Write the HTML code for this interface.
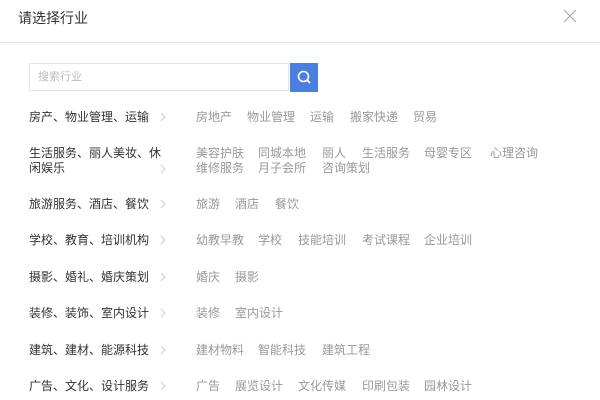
<!DOCTYPE html>
<html><head><meta charset="utf-8"><style>
body{margin:0;width:600px;height:400px;background:#fff;position:relative;overflow:hidden;font-family:"Liberation Sans","Noto Sans CJK SC",sans-serif;}
.t{position:absolute;left:18px;top:8px;font-size:14px;color:#333;line-height:20px}
.x{position:absolute;left:562px;top:8px}
.hr{position:absolute;left:0;top:42px;width:600px;height:1px;background:#e8e8e8}
.sb{position:absolute;left:29px;top:63px;width:260px;height:28px;border:1px solid #e4e4e4;box-sizing:border-box}
.sb span{position:absolute;left:8px;top:6px;font-size:11px;color:#bbb;line-height:14px}
.btn{position:absolute;left:290px;top:63px;width:28px;height:29px;background:#4a7fe0}
.c,.s{position:absolute;font-size:12px;line-height:16px;white-space:nowrap}
.c{left:29px;color:#333}
.s{color:#999}
.a{position:absolute;left:160px;width:6px;height:10px}
</style></head><body>
<div class="t">请选择行业</div>
<svg class="x" width="16" height="16" viewBox="0 0 16 16"><path d="M2 2L14 14M14 2L2 14" stroke="#aaa" stroke-width="1.2"/></svg>
<div class="hr"></div>
<div class="sb"><span>搜索行业</span></div>
<div class="btn"><svg width="28" height="29" viewBox="0 0 28 29"><circle cx="13.5" cy="13.5" r="5" fill="none" stroke="#fff" stroke-width="1.6"/><path d="M17 17L20 20" stroke="#fff" stroke-width="1.8"/></svg></div>

<svg style="display:none"><defs><symbol id="ch" viewBox="0 0 6 10"><path d="M1 1L5 5L1 9" fill="none" stroke="#ccc" stroke-width="1"/></symbol></defs></svg>

<div class="c" style="top:109px">房产、物业管理、运输</div><svg class="a" style="top:112px"><use href="#ch"/></svg>
<div class="s" style="left:196px;top:109px">房地产</div><div class="s" style="left:247px;top:109px">物业管理</div><div class="s" style="left:310px;top:109px">运输</div><div class="s" style="left:350px;top:109px">搬家快递</div><div class="s" style="left:413px;top:109px">贸易</div>

<div class="c" style="top:145px">生活服务、丽人美妆、休</div><div class="c" style="top:160px">闲娱乐</div><svg class="a" style="top:164px"><use href="#ch"/></svg>
<div class="s" style="left:196px;top:145px">美容护肤</div><div class="s" style="left:258px;top:145px">同城本地</div><div class="s" style="left:322px;top:145px">丽人</div><div class="s" style="left:362px;top:145px">生活服务</div><div class="s" style="left:424px;top:145px">母婴专区</div><div class="s" style="left:490px;top:145px">心理咨询</div>
<div class="s" style="left:196px;top:160px">维修服务</div><div class="s" style="left:258px;top:160px">月子会所</div><div class="s" style="left:322px;top:160px">咨询策划</div>

<div class="c" style="top:196px">旅游服务、酒店、餐饮</div><svg class="a" style="top:199px"><use href="#ch"/></svg>
<div class="s" style="left:196px;top:196px">旅游</div><div class="s" style="left:235px;top:196px">酒店</div><div class="s" style="left:275px;top:196px">餐饮</div>

<div class="c" style="top:232px">学校、教育、培训机构</div><svg class="a" style="top:235px"><use href="#ch"/></svg>
<div class="s" style="left:196px;top:232px">幼教早教</div><div class="s" style="left:258px;top:232px">学校</div><div class="s" style="left:298px;top:232px">技能培训</div><div class="s" style="left:362px;top:232px">考试课程</div><div class="s" style="left:424px;top:232px">企业培训</div>

<div class="c" style="top:269px">摄影、婚礼、婚庆策划</div><svg class="a" style="top:272px"><use href="#ch"/></svg>
<div class="s" style="left:196px;top:269px">婚庆</div><div class="s" style="left:235px;top:269px">摄影</div>

<div class="c" style="top:305px">装修、装饰、室内设计</div><svg class="a" style="top:308px"><use href="#ch"/></svg>
<div class="s" style="left:196px;top:305px">装修</div><div class="s" style="left:235px;top:305px">室内设计</div>

<div class="c" style="top:342px">建筑、建材、能源科技</div><svg class="a" style="top:345px"><use href="#ch"/></svg>
<div class="s" style="left:196px;top:342px">建材物料</div><div class="s" style="left:258px;top:342px">智能科技</div><div class="s" style="left:322px;top:342px">建筑工程</div>

<div class="c" style="top:378px">广告、文化、设计服务</div><svg class="a" style="top:381px"><use href="#ch"/></svg>
<div class="s" style="left:196px;top:378px">广告</div><div class="s" style="left:235px;top:378px">展览设计</div><div class="s" style="left:298px;top:378px">文化传媒</div><div class="s" style="left:362px;top:378px">印刷包装</div><div class="s" style="left:424px;top:378px">园林设计</div>
</body></html>
